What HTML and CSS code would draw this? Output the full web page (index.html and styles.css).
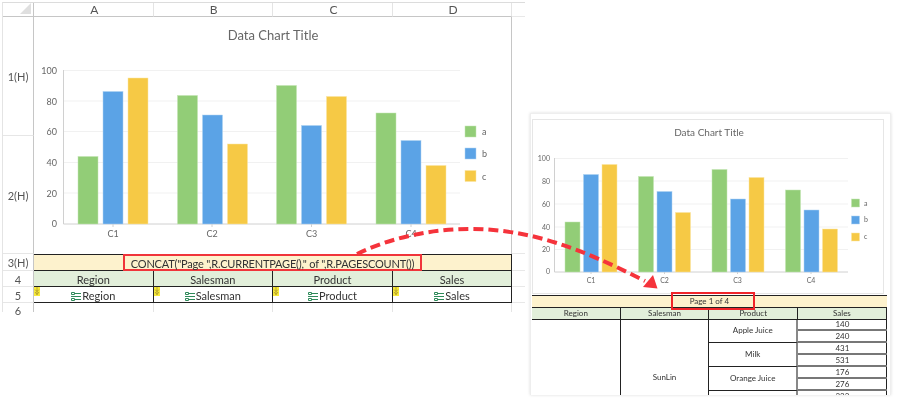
FILE: index.html
```html
<!DOCTYPE html>
<html lang="en">
<head>
  <meta charset="UTF-8">
  <title>Page count report</title>
  <link rel="stylesheet" href="styles.css">
</head>
<body>
  <div class="page">
    <div class="sheet">
      <div class="corner"><span class="corner-mark"></span></div>
      <div class="col-head">A</div>
      <div class="col-head">B</div>
      <div class="col-head">C</div>
      <div class="col-head">D</div>
      <div class="col-rest"></div>

      <div class="row-head chart-row-1">1(H)</div>
      <div class="row-head chart-row-2">2(H)</div>
      <div class="chart-cell">
        <svg class="chart" width="478" height="237" viewBox="34 17 478 237">
          <text class="title" x="273" y="40" text-anchor="middle">Data Chart Title</text>
          <g class="grid">
            <path d="M63 70.5H460M63 101H460M63 131.5H460M63 162.5H460M63 193H460"/>
          </g>
          <path class="axis" d="M63.5 70V224H460M113 224v3M212 224v3M311.500 224v3M411 224v3"/>
          <g class="ticks" text-anchor="end">
            <text x="57" y="74">100</text><text x="57" y="105">80</text><text x="57" y="135">60</text>
            <text x="57" y="166">40</text><text x="57" y="197">20</text><text x="57" y="227">0</text>
          </g>
          <g class="ticks" text-anchor="middle">
            <text x="113" y="237">C1</text><text x="212" y="237">C2</text>
            <text x="311.500" y="237">C3</text><text x="411" y="237">C4</text>
          </g>
          <g class="bar-a">
            <rect x="78" y="156.500" width="20" height="67.500"/><rect x="177.500" y="95.500" width="20" height="128.500"/>
            <rect x="276.500" y="85.500" width="20" height="138.500"/><rect x="376" y="113" width="20" height="111"/>
            <rect x="465" y="126" width="11" height="11"/>
          </g>
          <g class="bar-b">
            <rect x="103" y="91.500" width="20" height="132.500"/><rect x="202.500" y="115" width="20" height="109"/>
            <rect x="301.500" y="125.500" width="20" height="98.500"/><rect x="401" y="140.500" width="20" height="83.500"/>
            <rect x="465" y="148" width="11" height="11"/>
          </g>
          <g class="bar-c">
            <rect x="128" y="78" width="20" height="146"/><rect x="227.500" y="144" width="20" height="80"/>
            <rect x="326.500" y="96.500" width="20" height="127.500"/><rect x="426" y="165.500" width="20" height="58.500"/>
            <rect x="465" y="170.500" width="11" height="11"/>
          </g>
          <g class="ticks">
            <text x="482" y="135">a</text><text x="482" y="157">b</text><text x="482" y="180">c</text>
          </g>
        </svg>
      </div>
      <div class="col-rest chart-rest"></div>

      <div class="row-head">3(H)</div>
      <div class="title-cell"><span class="formula">CONCAT("Page ",R.CURRENTPAGE()," of ",R.PAGESCOUNT())</span></div>
      <div class="col-rest"></div>

      <div class="row-head">4</div>
      <div class="cell head">Region</div>
      <div class="cell head">Salesman</div>
      <div class="cell head">Product</div>
      <div class="cell head">Sales</div>
      <div class="col-rest"></div>

      <div class="row-head">5</div>
      <div class="cell field">
        <svg class="expand" width="6" height="9" viewBox="0 0 6 9"><path d="M3 0V8M1 2.500L3 4.500L5 2.500M1 5L3 7.500L5 5"/></svg>
        <svg class="field-icon" width="10" height="9" viewBox="0 0 10 9"><path d="M.5.500h3v2h-3zM.5 6.500h3v2h-3zM4 1.500h6M0 4.500h10M4 7.500h6"/></svg>Region
      </div>
      <div class="cell field">
        <svg class="expand" width="6" height="9" viewBox="0 0 6 9"><path d="M3 0V8M1 2.500L3 4.500L5 2.500M1 5L3 7.500L5 5"/></svg>
        <svg class="field-icon" width="10" height="9" viewBox="0 0 10 9"><path d="M.5.500h3v2h-3zM.5 6.500h3v2h-3zM4 1.500h6M0 4.500h10M4 7.500h6"/></svg>Salesman
      </div>
      <div class="cell field">
        <svg class="expand" width="6" height="9" viewBox="0 0 6 9"><path d="M3 0V8M1 2.500L3 4.500L5 2.500M1 5L3 7.500L5 5"/></svg>
        <svg class="field-icon" width="10" height="9" viewBox="0 0 10 9"><path d="M.5.500h3v2h-3zM.5 6.500h3v2h-3zM4 1.500h6M0 4.500h10M4 7.500h6"/></svg>Product
      </div>
      <div class="cell field">
        <svg class="expand" width="6" height="9" viewBox="0 0 6 9"><path d="M3 0V8M1 2.500L3 4.500L5 2.500M1 5L3 7.500L5 5"/></svg>
        <svg class="field-icon" width="10" height="9" viewBox="0 0 10 9"><path d="M.5.500h3v2h-3zM.5 6.500h3v2h-3zM4 1.500h6M0 4.500h10M4 7.500h6"/></svg>Sales
      </div>
      <div class="col-rest"></div>

      <div class="row-head last">6</div>
      <div class="blank"></div>
      <div class="blank"></div>
      <div class="blank"></div>
      <div class="blank"></div>
      <div class="col-rest no-line"></div>
    </div>

    <div class="preview">
      <div class="preview-chart">
        <svg class="chart" width="354" height="174" viewBox="532 118 354 174">
          <text class="title small-title" x="709" y="135" text-anchor="middle">Data Chart Title</text>
          <g class="grid">
            <path d="M554 157.500H848M554 180H848M554 203H848M554 226H848M554 248.500H848"/>
          </g>
          <path class="axis" d="M554.500 157V271H848M591 271v2M664.500 271v2M737.500 271v2M811 271v2"/>
          <g class="ticks tiny" text-anchor="end">
            <text x="550" y="160">100</text><text x="550" y="183">80</text><text x="550" y="206">60</text>
            <text x="550" y="229">40</text><text x="550" y="251">20</text><text x="550" y="273">0</text>
          </g>
          <g class="ticks tiny" text-anchor="middle">
            <text x="591" y="282">C1</text><text x="664.500" y="282">C2</text>
            <text x="737.500" y="282">C3</text><text x="811" y="282">C4</text>
          </g>
          <g class="bar-a">
            <rect x="565" y="221" width="15" height="50"/><rect x="638.500" y="175.500" width="15" height="95.500"/>
            <rect x="712" y="168.500" width="15" height="102.500"/><rect x="785.500" y="189" width="15" height="82"/>
            <rect x="851.500" y="198" width="8" height="8"/>
          </g>
          <g class="bar-b">
            <rect x="583.500" y="173.500" width="15" height="97.500"/><rect x="657" y="190.500" width="15" height="80.500"/>
            <rect x="730.500" y="198" width="15" height="73"/><rect x="804" y="209" width="15" height="62"/>
            <rect x="851.500" y="215" width="8" height="8"/>
          </g>
          <g class="bar-c">
            <rect x="602" y="163.500" width="15" height="107.500"/><rect x="675.500" y="211.500" width="15" height="59.500"/>
            <rect x="749" y="176.500" width="15" height="94.500"/><rect x="822.500" y="228" width="15" height="43"/>
            <rect x="851.500" y="232" width="8" height="8"/>
          </g>
          <g class="ticks tiny">
            <text x="864" y="205">a</text><text x="864" y="221">b</text><text x="864" y="238">c</text>
          </g>
        </svg>
      </div>
      <div class="report">
        <div class="report-title">Page 1 of 4</div>
        <div class="report-head">Region</div>
        <div class="report-head">Salesman</div>
        <div class="report-head">Product</div>
        <div class="report-head">Sales</div>
        <div class="region"></div>
        <div class="salesman">SunLin</div>
        <div class="product p1">Apple Juice</div>
        <div class="sales s1">140</div>
        <div class="sales s2">240</div>
        <div class="product p2">Milk</div>
        <div class="sales s3">431</div>
        <div class="sales s4">531</div>
        <div class="product p3">Orange Juice</div>
        <div class="sales s5">176</div>
        <div class="sales s6">276</div>
        <div class="product p4"></div>
        <div class="sales s7">333</div>
      </div>
      <div class="page-mark"></div>
    </div>

    <svg class="arrow" width="900" height="400" viewBox="0 0 900 400">
      <path class="arrow-line" d="M357 254C390 238 430 229 470 229C530 229 580 248 645 281"/>
      <path class="arrow-head" d="M653 275L657.500 288.500L643 287Z"/>
    </svg>
  </div>
</body>
</html>
```

FILE: styles.css
```css
body {
  margin: 0;
  background: #fff;
  font-family: Lato, "Open Sans", sans-serif;
  color: #333;
}
.page {
  position: relative;
  width: 900px;
  height: 400px;
  overflow: hidden;
  display: flex;
  align-items: flex-start;
}

/* left: the designer sheet */
.sheet {
  margin: 2px 0 0 2px;
  width: 523px;
  height: 310px;
  display: grid;
  grid-template-columns: 31px 119.500px 119.500px 120px 119px 13px;
  grid-template-rows: 14px 119px 118px 17px 16px 16px 9px;
  font-size: 11px;
  border-top: 1px solid #dcdcdc;
  border-left: 1px solid #e4e4e4;
  box-sizing: border-box;
  filter: blur(0.25px);
}
.corner {
  position: relative;
  border-bottom: 1px solid #c6c6c6;
  border-right: 1px solid #c6c6c6;
}
.corner-mark {
  position: absolute;
  right: 2px;
  bottom: 2px;
  width: 0;
  height: 0;
  border-left: 11px solid transparent;
  border-bottom: 11px solid #dfdfdf;
}
.col-head {
  display: flex;
  align-items: center;
  justify-content: center;
  padding-left: 2px;
  font-size: 12px;
  color: #555;
  border-bottom: 1px solid #c6c6c6;
  border-right: 1px solid #e4e4e4;
}
.col-rest {
  border-bottom: 1px solid #e8e8e8;
}
.col-rest.no-line {
  border-bottom: none;
}
.row-head {
  display: flex;
  align-items: center;
  justify-content: center;
  padding-top: 1px;
  color: #555;
  border-right: 1px solid #c6c6c6;
  border-bottom: 1px solid #e6e6e6;
}
.row-head.last {
  border-bottom: none;
  align-items: flex-start;
}
.chart-row-1 {
  grid-column: 1;
  grid-row: 2;
}
.chart-row-2 {
  grid-column: 1;
  grid-row: 3;
}
.chart-cell {
  grid-column: 2 / 6;
  grid-row: 2 / 4;
  border-right: 1px solid #c6c6c6;
  box-sizing: border-box;
  overflow: hidden;
}
.chart-rest {
  grid-column: 6;
  grid-row: 2 / 4;
}
.chart {
  display: block;
}
.title {
  font-size: 13px;
  fill: #666;
}
.small-title {
  font-size: 10px;
}
.grid path {
  stroke: #f1f1f1;
  stroke-width: 1;
  fill: none;
}
.axis {
  stroke: #d0d0d0;
  stroke-width: 1;
  fill: none;
}
.ticks {
  font-size: 9px;
  fill: #666;
}
.ticks.tiny {
  font-size: 7px;
}
.bar-a rect {
  fill: #92cd77;
  stroke: #c4e6b4;
  stroke-width: 0.5;
}
.bar-b rect {
  fill: #5ba3e6;
  stroke: #b0d3f3;
  stroke-width: 0.5;
}
.bar-c rect {
  fill: #f6c945;
  stroke: #fbe5a4;
  stroke-width: 0.5;
}

.title-cell {
  grid-column: 2 / 6;
  background: #fdf2cd;
  border-top: 1px solid #222;
  border-right: 1px solid #222;
  border-bottom: 1px solid #222;
  display: flex;
  justify-content: center;
  box-sizing: border-box;
}
.formula {
  border: 2px solid #f0343a;
  margin: -1px 0;
  padding: 0 6px;
  white-space: nowrap;
  line-height: 15px;
  letter-spacing: -0.2px;
}
.cell {
  position: relative;
  display: flex;
  align-items: center;
  justify-content: center;
  padding-top: 1px;
  border-right: 1px solid #222;
  border-bottom: 1px solid #222;
  box-sizing: border-box;
}
.cell.head {
  background: #e2efda;
}
.expand {
  position: absolute;
  left: 0;
  top: 0;
  background: #f7ea3c;
}
.expand path {
  stroke: #a8962a;
  stroke-width: 0.8;
  fill: none;
}
.field-icon {
  margin: 2px 1px 0 0;
}
.field-icon path {
  stroke: #2f8a5a;
  stroke-width: 1;
  fill: none;
}
.blank {
  border-right: 1px solid #e4e4e4;
}

/* right: the rendered report */
.preview {
  position: relative;
  margin: 113px 0 0 5px;
  width: 361px;
  height: 282px;
  box-sizing: border-box;
  padding: 5px 6px 0 1px;
  border: 1px solid #eee;
  border-bottom: none;
  box-shadow: 0 0 3px #ddd;
  overflow: hidden;
  filter: blur(0.4px);
}
.preview-chart {
  border: 1px solid #e6e6e6;
  box-sizing: border-box;
  height: 175px;
}
.preview-chart .chart {
  margin: -1px;
}
.report {
  margin-top: 1px;
  display: grid;
  grid-template-columns: repeat(4, 88.700px);
  grid-template-rows: 12px 11.500px;
  grid-auto-rows: 11.900px;
  font-size: 8px;
  border-top: 1px solid #222;
  border-right: 1px solid #222;
  width: 355px;
  box-sizing: border-box;
}
.report > div {
  display: flex;
  align-items: center;
  justify-content: center;
  box-sizing: border-box;
}
.report-title {
  grid-column: 1 / 5;
  background: #fdf2cd;
  border-bottom: 1px solid #222;
  padding-bottom: 1px;
}
.report-head {
  background: #e2efda;
  border-bottom: 1px solid #222;
  border-right: 1px solid #222;
  padding-bottom: 1px;
}
.region {
  grid-column: 1;
  grid-row: 3 / 13;
  border-right: 1px solid #222;
}
.salesman {
  grid-column: 2;
  grid-row: 3 / 13;
  border-right: 1px solid #222;
  padding-bottom: 3px;
}
.product {
  grid-column: 3;
  border-right: 2px solid #888;
  border-bottom: 1px solid #222;
  padding-bottom: 1px;
}
.p1 { grid-row: 3 / 5; }
.p2 { grid-row: 5 / 7; }
.p3 { grid-row: 7 / 9; }
.p4 { grid-row: 9 / 11; }
.sales {
  grid-column: 4;
  border-bottom: 2px solid #777;
}
.s1 { grid-row: 3; }
.s2 { grid-row: 4; }
.s3 { grid-row: 5; }
.s4 { grid-row: 6; }
.s5 { grid-row: 7; }
.s6 { grid-row: 8; }
.s7 { grid-row: 9; }
.page-mark {
  position: absolute;
  left: 140px;
  top: 178px;
  width: 84px;
  height: 18px;
  box-sizing: border-box;
  border: 2px solid #f0242a;
}

.arrow {
  position: absolute;
  left: 0;
  top: 0;
  pointer-events: none;
}
.arrow-line {
  fill: none;
  stroke: #f5333b;
  stroke-width: 4;
  stroke-dasharray: 10 5;
}
.arrow-head {
  fill: #f5333b;
}
```
